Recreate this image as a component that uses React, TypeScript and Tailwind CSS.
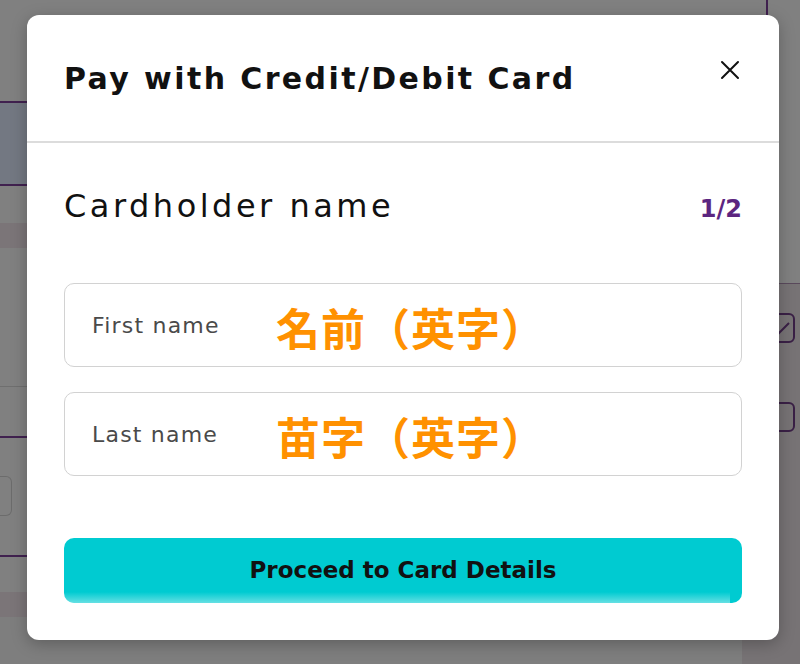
import type { ReactNode } from "react";

const FONT = "font-['DejaVu_Sans','Noto_Sans_CJK_JP',sans-serif]";

function CloseIcon() {
  return (
    <svg width="20" height="20" viewBox="0 0 20 20" fill="none" stroke="#111" strokeWidth="2" strokeLinecap="round">
      <path d="M2 2 L18 18 M18 2 L2 18" />
    </svg>
  );
}

function NameField({ label, value }: { label: string; value: ReactNode }) {
  return (
    <div className="flex h-[84px] items-center rounded-[10px] border border-[#d2d2d2] pl-[27px]">
      <span className="w-[184px] shrink-0 text-[22px] tracking-[1.2px] text-[#4a4a4a]">{label}</span>
      <span className="mt-[4px] font-['Noto_Sans_CJK_JP',sans-serif] text-[44px] font-bold leading-none tracking-[1px] text-[#ff9100]">
        {value}
      </span>
    </div>
  );
}

export default function App() {
  return (
    <div className={`relative flex h-[664px] w-full overflow-hidden bg-[#808080] ${FONT}`}>
      {/* Dimmed page behind the dialog */}
      <div className="flex flex-1 flex-col">
        <div className="h-[101px]" />
        <div className="h-[2px] bg-[#40214f]" />
        <div className="h-[81px] bg-[#737882]" />
        <div className="h-[2px] bg-[#40214f]" />
        <div className="h-[37px]" />
        <div className="h-[25px] bg-[#7b7578]" />
        <div className="h-[138px]" />
        <div className="h-px bg-[#6f6f6f]" />
        <div className="h-[49px]" />
        <div className="h-[2px] bg-[#40214f]" />
        <div className="h-[38px]" />
        <div className="h-[40px] w-[12px] rounded-r-md border border-l-0 border-[#6c6c6c]" />
        <div className="h-[39px]" />
        <div className="h-[2px] bg-[#40214f]" />
        <div className="h-[35px]" />
        <div className="h-[25px] bg-[#7b7578]" />
        <div className="flex-1 bg-[#7e7e7e]" />
      </div>
      <div className="flex w-[58px] flex-col">
        <div className="ml-[24px] h-[283px] border-l-2 border-[#40214f]" />
        <div className="flex flex-1 flex-col items-end gap-[59px] border-t border-[#5a4a5c] bg-[#777375] pr-[5px] pt-[29px]">
          <div className="flex h-[30px] w-[26px] items-center justify-center rounded-md border-2 border-[#3a2046]">
            <svg width="18" height="14" viewBox="0 0 18 14" fill="none" stroke="#3a2046" strokeWidth="2">
              <path d="M2 8 L6 12 L16 2" />
            </svg>
          </div>
          <div className="h-[30px] w-[26px] rounded-md border-2 border-[#3a2046]" />
        </div>
      </div>

      {/* Dialog */}
      <div className="absolute inset-0 pl-[27px] pt-[15px]">
        <div className="flex h-[625px] w-[752px] flex-col rounded-[12px] bg-white shadow-[0_4px_16px_rgba(0,0,0,0.25)]">
          <div className="flex h-[128px] shrink-0 items-start justify-between border-b-2 border-[#dcdcdc] pl-[37px] pr-[39px] pt-[44px]">
            <h2 className="text-[30px] font-bold leading-[40px] tracking-[2.4px] text-[#111]">Pay with Credit/Debit Card</h2>
            <button className="mt-[1px]">
              <CloseIcon />
            </button>
          </div>

          <div className="flex flex-1 flex-col px-[37px] pt-[43px]">
            <div className="flex items-baseline justify-between">
              <span className="text-[32px] leading-[40px] tracking-[3.5px] text-[#111]">Cardholder name</span>
              <span className="text-[24px] font-bold text-[#5c2580]">1/2</span>
            </div>

            <div className="mt-[56px] flex flex-col gap-[25px]">
              <NameField label="First name" value="名前（英字）" />
              <NameField label="Last name" value="苗字（英字）" />
            </div>

            <button className="relative mt-[62px] flex h-[65px] items-center justify-center overflow-hidden rounded-[10px] bg-[#00cbd1] text-[23px] font-bold text-[#111]">
              Proceed to Card Details
              <span className="absolute bottom-0 left-0 right-[12px] h-[11px] bg-gradient-to-b from-transparent to-white/40" />
            </button>
          </div>
        </div>
      </div>
    </div>
  );
}
